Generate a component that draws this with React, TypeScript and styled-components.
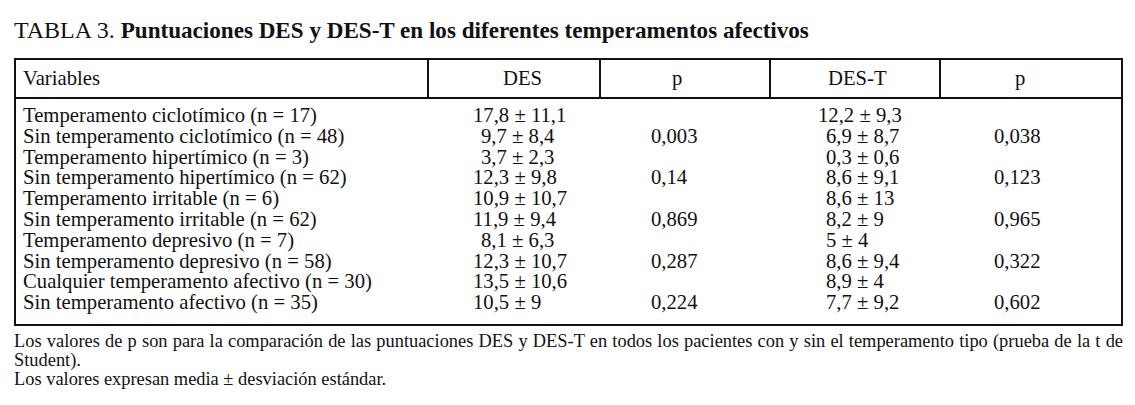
import React from "react";
import styled, { createGlobalStyle } from "styled-components";

const Global = createGlobalStyle`
  html, body { margin: 0; padding: 0; background: #fff; }
  body { font-family: "Liberation Serif", "Times New Roman", serif; color: #111; }
`;

const Page = styled.div`
  padding: 16px 12px 0 14px;
  width: 1109px;
`;

const Title = styled.h1`
  margin: 0;
  font-size: 24px;
  line-height: 28px;
  font-weight: normal;
  white-space: nowrap;
`;

const Strong = styled.b`
  font-weight: bold;
  font-size: 23.1px;
`;

const Table = styled.div`
  margin-top: 14px;
  border: 2px solid #111;
  font-size: 20.7px;
  line-height: 20.8px;
`;

const Grid = styled.div`
  display: grid;
  grid-template-columns: 411px 172px 170px 170px 182px;
`;

const Header = styled(Grid)`
  border-bottom: 2px solid #111;
`;

const HeaderCell = styled.div<{ $pad: number; $first?: boolean }>`
  height: 37px;
  box-sizing: border-box;
  padding: 8px 0 0 ${(p) => p.$pad}px;
  border-left: ${(p) => (p.$first ? "none" : "2px solid #111")};
  white-space: nowrap;
`;

const Body = styled(Grid)`
  padding: 6px 0 11px;
`;

const Cell = styled.div<{ $pad: number; $indent?: boolean }>`
  padding-left: ${(p) => p.$pad + (p.$indent ? 8 : 0)}px;
  height: 20.8px;
  white-space: nowrap;
`;

const Notes = styled.div`
  margin-top: 6px;
  font-size: 18.4px;
  line-height: 19px;
`;

const Note = styled.p<{ $justify?: boolean }>`
  margin: 0;
  text-align: ${(p) => (p.$justify ? "justify" : "left")};
`;

const columns = [
  { label: "Variables", head: 7, cell: 7 },
  { label: "DES", head: 74, cell: 46 },
  { label: "p", head: 71, cell: 52 },
  { label: "DES-T", head: 57, cell: 49 },
  { label: "p", head: 74, cell: 55 },
];

const rows: string[][] = [
  ["Temperamento ciclotímico (n = 17)", "17,8 ± 11,1", "", "12,2 ± 9,3", ""],
  ["Sin temperamento ciclotímico (n = 48)", "9,7 ± 8,4", "0,003", "6,9 ± 8,7", "0,038"],
  ["Temperamento hipertímico (n = 3)", "3,7 ± 2,3", "", "0,3 ± 0,6", ""],
  ["Sin temperamento hipertímico (n = 62)", "12,3 ± 9,8", "0,14", "8,6 ± 9,1", "0,123"],
  ["Temperamento irritable (n = 6)", "10,9 ± 10,7", "", "8,6 ± 13", ""],
  ["Sin temperamento irritable (n = 62)", "11,9 ± 9,4", "0,869", "8,2 ± 9", "0,965"],
  ["Temperamento depresivo (n = 7)", "8,1 ± 6,3", "", "5 ± 4", ""],
  ["Sin temperamento depresivo (n = 58)", "12,3 ± 10,7", "0,287", "8,6 ± 9,4", "0,322"],
  ["Cualquier temperamento afectivo (n = 30)", "13,5 ± 10,6", "", "8,9 ± 4", ""],
  ["Sin temperamento afectivo (n = 35)", "10,5 ± 9", "0,224", "7,7 ± 9,2", "0,602"],
];

const isShort = (v: string, col: number) =>
  (col === 1 || col === 3) && /^\d[, ]/.test(v);

export default function App() {
  return (
    <>
      <Global />
      <Page>
        <Title>
          TABLA 3. <Strong>Puntuaciones DES y DES-T en los diferentes temperamentos afectivos</Strong>
        </Title>
        <Table>
          <Header>
            {columns.map((c, i) => (
              <HeaderCell key={i} $pad={c.head} $first={i === 0}>
                {c.label}
              </HeaderCell>
            ))}
          </Header>
          <Body>
            {rows.map((r, ri) =>
              r.map((v, ci) => (
                <Cell key={`${ri}-${ci}`} $pad={columns[ci].cell} $indent={isShort(v, ci)}>
                  {v}
                </Cell>
              ))
            )}
          </Body>
        </Table>
        <Notes>
          <Note $justify>
            Los valores de p son para la comparación de las puntuaciones DES y DES-T en todos los pacientes con y sin el temperamento tipo (prueba de la t de Student).
          </Note>
          <Note>Los valores expresan media ± desviación estándar.</Note>
        </Notes>
      </Page>
    </>
  );
}
